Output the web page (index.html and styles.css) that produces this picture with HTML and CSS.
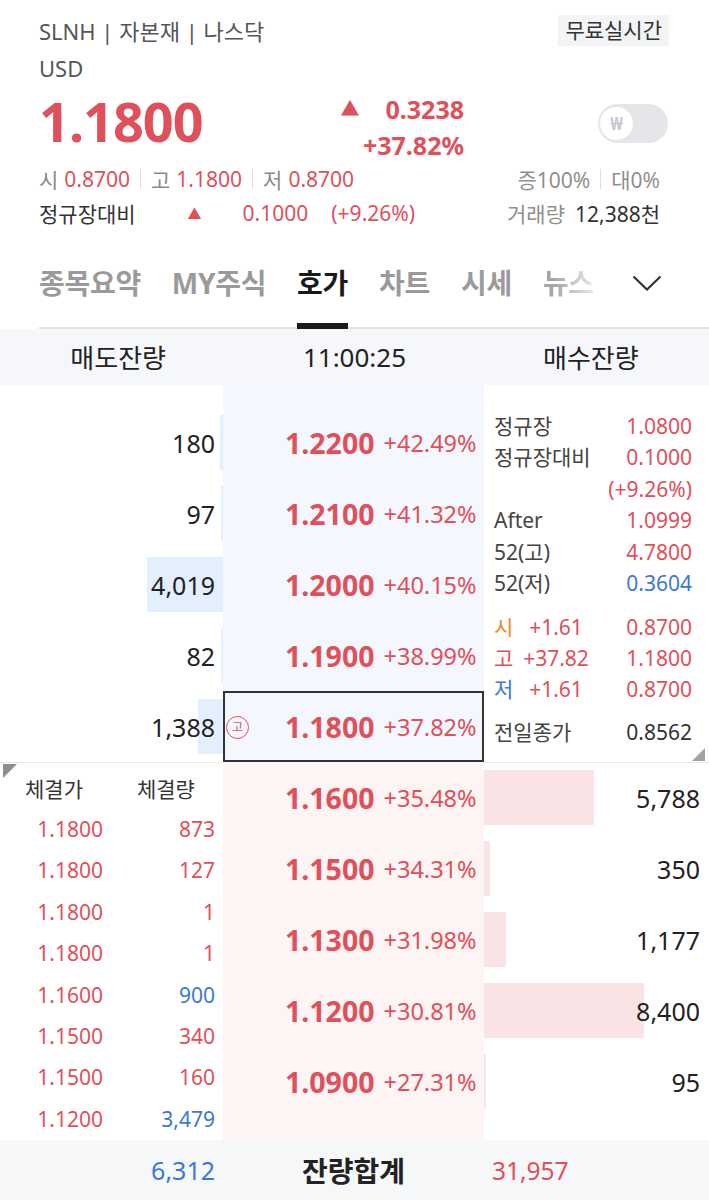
FILE: index.html
```html
<!DOCTYPE html>
<html lang="ko">
<head>
<meta charset="utf-8">
<link rel="stylesheet" href="styles.css">
</head>
<body>
<div class="page">
  <section class="top">
    <div class="r1">
      <span class="title">SLNH | 자본재 | 나스닥</span>
      <span class="badge">무료실시간</span>
    </div>
    <div class="usd">USD</div>
    <div class="pr">
      <div class="big">1.1800</div>
      <div class="chg">
        <div class="chg-l1"><span class="tri">▲</span><span>0.3238</span></div>
        <div>+37.82%</div>
      </div>
      <div class="toggle"><span class="knob">₩</span></div>
    </div>
    <div class="st">
      <div class="st-left">
        <span class="lb">시</span><span class="rd">0.8700</span><span class="sep"></span>
        <span class="lb">고</span><span class="rd">1.1800</span><span class="sep"></span>
        <span class="lb">저</span><span class="rd">0.8700</span>
      </div>
      <div class="st-right">
        <span class="lb2">증100%</span><span class="sep"></span><span class="lb2">대0%</span>
      </div>
    </div>
    <div class="st">
      <div class="st-left">
        <span class="dk">정규장대비</span><span class="rd tri-s">▲</span><span class="rd v1">0.1000</span><span class="rd v2">(+9.26%)</span>
      </div>
      <div class="st-right">
        <span class="lb2">거래량</span><span class="dk vol">12,388천</span>
      </div>
    </div>
  </section>

  <nav class="tabs">
    <span class="tab">종목요약</span>
    <span class="tab">MY주식</span>
    <span class="tab active">호가</span>
    <span class="tab">차트</span>
    <span class="tab">시세</span>
    <span class="tab fade">뉴스</span>
    <span class="chev"><svg width="30" height="16" viewBox="0 0 30 16"><path d="M1.5 1.5 L15 14.5 L28.5 1.5" fill="none" stroke="#333" stroke-width="2.2"/></svg></span>
  </nav>

  <div class="ob-head">
    <span>매도잔량</span><span>11:00:25</span><span>매수잔량</span>
  </div>

  <section class="ask">
    <div class="col-qty">
      <div class="qrow" style="--w:3px">180</div>
      <div class="qrow" style="--w:2px">97</div>
      <div class="qrow" style="--w:76px">4,019</div>
      <div class="qrow" style="--w:2px">82</div>
      <div class="qrow" style="--w:25px">1,388</div>
    </div>
    <div class="col-price ask-bg">
      <div class="prow"><span class="p">1.2200</span><span class="pc">+42.49%</span></div>
      <div class="prow"><span class="p">1.2100</span><span class="pc">+41.32%</span></div>
      <div class="prow"><span class="p">1.2000</span><span class="pc">+40.15%</span></div>
      <div class="prow"><span class="p">1.1900</span><span class="pc">+38.99%</span></div>
      <div class="prow cur"><span class="hi">고</span><span class="p">1.1800</span><span class="pc">+37.82%</span></div>
    </div>
    <div class="info">
      <div class="irow"><span>정규장</span><span class="rd">1.0800</span></div>
      <div class="irow"><span>정규장대비</span><span class="rd">0.1000</span></div>
      <div class="irow"><span></span><span class="rd">(+9.26%)</span></div>
      <div class="irow"><span>After</span><span class="rd">1.0999</span></div>
      <div class="irow"><span>52(고)</span><span class="rd">4.7800</span></div>
      <div class="irow"><span>52(저)</span><span class="bl">0.3604</span></div>
      <div class="igroup">
        <div class="i3"><span class="or">시</span><span class="rd mid">+1.61</span><span class="rd">0.8700</span></div>
        <div class="i3"><span class="rd">고</span><span class="rd mid">+37.82</span><span class="rd">1.1800</span></div>
        <div class="i3"><span class="bl">저</span><span class="rd mid">+1.61</span><span class="rd">0.8700</span></div>
      </div>
      <div class="irow last"><span>전일종가</span><span class="dk">0.8562</span></div>
      <svg class="corner-br" width="13" height="13" viewBox="0 0 13 13"><path d="M13 0 L13 13 L0 13 Z" fill="#a3a3a3"/></svg>
    </div>
  </section>

  <section class="bid">
    <div class="trades">
      <svg class="corner-tl" width="14" height="14" viewBox="0 0 14 14"><path d="M0 0 L14 0 L0 14 Z" fill="#8e8e8e"/></svg>
      <div class="thead"><span class="th1">체결가</span><span class="th2">체결량</span></div>
      <div class="trow"><span>1.1800</span><span>873</span></div>
      <div class="trow"><span>1.1800</span><span>127</span></div>
      <div class="trow"><span>1.1800</span><span>1</span></div>
      <div class="trow"><span>1.1800</span><span>1</span></div>
      <div class="trow"><span>1.1600</span><span class="bl">900</span></div>
      <div class="trow"><span>1.1500</span><span>340</span></div>
      <div class="trow"><span>1.1500</span><span>160</span></div>
      <div class="trow"><span>1.1200</span><span class="bl">3,479</span></div>
    </div>
    <div class="col-price bid-bg">
      <div class="prow"><span class="p">1.1600</span><span class="pc">+35.48%</span></div>
      <div class="prow"><span class="p">1.1500</span><span class="pc">+34.31%</span></div>
      <div class="prow"><span class="p">1.1300</span><span class="pc">+31.98%</span></div>
      <div class="prow"><span class="p">1.1200</span><span class="pc">+30.81%</span></div>
      <div class="prow"><span class="p">1.0900</span><span class="pc">+27.31%</span></div>
    </div>
    <div class="col-bqty">
      <div class="brow" style="--w:110px">5,788</div>
      <div class="brow" style="--w:6px">350</div>
      <div class="brow" style="--w:22px">1,177</div>
      <div class="brow" style="--w:160px">8,400</div>
      <div class="brow" style="--w:2px">95</div>
    </div>
  </section>

  <footer class="foot">
    <span class="f-l">6,312</span>
    <span class="f-m">잔량합계</span>
    <span class="f-r">31,957</span>
  </footer>
</div>
</body>
</html>
```

FILE: styles.css
```css
* { box-sizing: border-box; margin: 0; padding: 0; }
html, body { background: #fff; }
body {
  font-family: "Noto Sans", "Noto Sans CJK KR", sans-serif;
  color: #222;
  width: 709px;
  overflow: hidden;
}
.page { width: 709px; }

.rd { color: #e0505a; }
.bl { color: #3b79d5; }
.or { color: #ef8a25; }
.dk { color: #333; }

/* top info */
.top { padding: 12px 41px 0 39px; }
.r1 { height: 36px; display: flex; align-items: center; justify-content: space-between; }
.title { font-size: 22px; color: #555; }
.badge {
  font-size: 21px; color: #333; background: #f2f4f6;
  height: 31px; line-height: 31px; padding: 0 7px; margin-right: -1px;
}
.usd { height: 40px; line-height: 40px; font-size: 22px; color: #555; }
.pr { height: 74px; display: flex; align-items: flex-start; }
.big {
  flex: 1; font-size: 54px; font-weight: 700; color: #e0505a;
  line-height: 54px; margin-top: 6px; letter-spacing: -1px;
}
.chg {
  text-align: right; font-size: 25px; font-weight: 700; color: #e0505a;
  line-height: 36px; margin-top: 3px;
}
.chg-l1 { display: flex; justify-content: flex-end; align-items: center; }
.tri { font-size: 19px; margin-right: 26px; }
.toggle {
  width: 70px; height: 39px; border-radius: 20px; background: #e4e6ea;
  margin-left: 134px; margin-top: 16px; display: flex; align-items: center; padding-left: 2px;
}
.knob {
  width: 33px; height: 33px; border-radius: 50%; background: #fff;
  color: #c3c7cc; font-size: 17px; font-weight: 700;
  display: flex; align-items: center; justify-content: center;
}
.st { height: 34px; display: flex; align-items: center; justify-content: space-between; font-size: 21px; }
.st-left, .st-right { display: flex; align-items: center; }
.st-right { margin-right: 8px; }
.lb { color: #8a8a8a; margin-right: 6px; }
.lb2 { color: #8f8f8f; }
.sep { width: 1px; height: 20px; background: #dedede; margin: 0 10px; }
.tri-s { font-size: 14px; margin-left: 52px; }
.v1 { margin-left: 41px; }
.v2 { margin-left: 23px; }
.vol { margin-left: 10px; }

/* tabs */
.tabs {
  margin-left: 39px; height: 99px; border-bottom: 2px solid #e2e2e2;
  display: flex; align-items: flex-start; padding-top: 30px; gap: 31px;
}
.tab {
  position: relative; font-size: 28px; font-weight: 700; color: #9a9a9a;
  line-height: 46px; height: 67px; letter-spacing: -0.3px;
}
.tab.active { color: #1a1a1a; }
.tab.active::after {
  content: ""; position: absolute; left: 0; right: 0; bottom: -2px; height: 6px; background: #1a1a1a;
}
.tab.fade {
  background: linear-gradient(to right, #a5a5a5 20%, #e4e4e4 95%);
  -webkit-background-clip: text; background-clip: text; color: transparent;
}
.chev { margin-left: 7px; height: 46px; display: flex; align-items: center; }

/* order book head */
.ob-head {
  height: 56px; background: #f5f7fa; display: grid; grid-template-columns: 1fr 1fr 1fr;
  align-items: center; text-align: center; font-size: 26px; color: #222;
}

.ask, .bid { display: grid; grid-template-columns: 223px 261px 225px; }
.ask { height: 377px; }
.bid { height: 378px; }

.col-qty { padding-top: 22px; }
.qrow {
  height: 71px; display: flex; align-items: center; justify-content: flex-end;
  padding-right: 8px; font-size: 25px; color: #222;
  background: linear-gradient(to left, #e3effc var(--w), transparent var(--w)) right center / 100% 55px no-repeat;
}

.ask-bg { background: #f4f8fe; padding-top: 22px; }
.bid-bg { background: #fdf4f4; }
.prow {
  position: relative; height: 71px; display: flex; align-items: center;
  padding-left: 62px; gap: 9px;
}
.p { font-size: 28.5px; font-weight: 700; color: #e0505a; }
.pc { font-size: 23.5px; color: #e0505a; }
.prow.cur { border: 2px solid #333; padding-left: 60px; }
.hi {
  position: absolute; left: 1px; top: 50%; margin-top: -11px;
  width: 23px; height: 23px; border: 1.2px solid #e0505a; border-radius: 50%;
  color: #e0505a; font-size: 12px; display: flex; align-items: center; justify-content: center;
}

.info { position: relative; padding: 26px 17px 0 10px; font-size: 21px; color: #444; }
.irow { display: flex; justify-content: space-between; line-height: 31.4px; height: 31.4px; }
.igroup { margin-top: 12.5px; }
.i3 { display: grid; grid-template-columns: 28px 68px 1fr; line-height: 31px; height: 31px; }
.i3 .mid { text-align: center; }
.i3 span:last-child { text-align: right; }
.irow.last { margin-top: 12px; }
.corner-br { position: absolute; right: 4px; bottom: 1px; }

.trades { position: relative; border-top: 1px solid #e9e9e9; padding-top: 3px; }
.corner-tl { position: absolute; left: 3px; top: 1px; }
.thead { height: 43px; display: flex; align-items: center; font-size: 21px; color: #333; }
.th1 { margin-left: 25px; }
.th2 { margin-left: 54px; }
.trow {
  display: grid; grid-template-columns: 110px 113px; height: 41.4px; line-height: 41.4px;
  font-size: 21px; color: #e0505a;
}
.trow span { text-align: right; padding-right: 7px; }
.trow span:last-child { padding-right: 8px; }

.col-bqty { border-top: 1px solid #e9e9e9; }
.brow {
  height: 71px; display: flex; align-items: center; justify-content: flex-end;
  padding-right: 9px; font-size: 25px; color: #222;
  background: linear-gradient(to right, #fae3e4 var(--w), transparent var(--w)) left center / 100% 55px no-repeat;
}
.col-bqty .brow:first-child { margin-top: -1px; }

.foot {
  height: 60px; background: #f6f7f9; display: grid; grid-template-columns: 223px 261px 225px;
  align-items: center; font-size: 25px;
}
.f-l { text-align: right; padding-right: 8px; color: #3b79d5; }
.f-m { text-align: center; font-weight: 700; font-size: 28px; color: #222; }
.f-r { padding-left: 8px; color: #e0505a; font-size: 24.5px; }
```
